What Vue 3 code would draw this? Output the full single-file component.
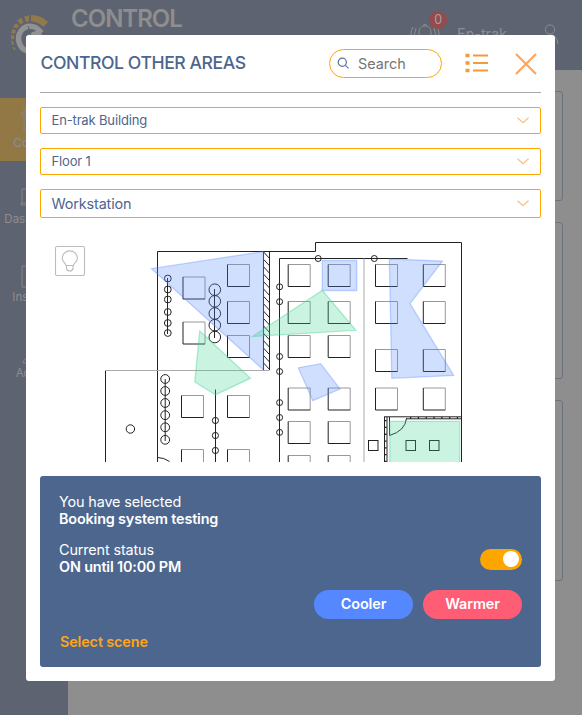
<script setup>
import { ref } from 'vue'

const enabled = ref(true)
const selects = [
  { label: 'En-trak Building', size: 'small' },
  { label: 'Floor 1', size: 'small' },
  { label: 'Workstation', size: 'large' },
]
const desks = [
  [183, 277], [183, 322], [227.5, 264.5], [227.5, 301.5], [227.5, 335.5],
  [181.5, 395.5], [227.5, 395.5], [181.5, 449.5], [227.5, 449.5],
  ...[264.5, 301.5, 335.5, 388, 421.5, 455.5].flatMap((y) => [[288.2, y], [328.2, y]]),
  ...[264.5, 301.5, 349.5, 388].flatMap((y) => [[375.5, y], [423.3, y]]),
]
const stools = [[368.5, 440.5], [406, 440.5], [429.5, 440.5]]
const column = (x, r, ys) => ys.map((y) => ({ x, y, r }))
const circles = [
  ...column(167.8, 3.4, [278.5, 289.5, 299.5, 312, 323, 333]),
  ...column(214.8, 5.8, [289.7, 301.3, 313.5, 325.2, 337]),
  ...column(165.2, 4.4, [379, 391, 403, 415.2, 427.3, 439.8]),
  ...column(130.4, 4.2, [429]),
  ...column(215.4, 3.1, [420.5, 435.5, 450.5]),
  ...column(279.6, 3, [286.8, 301.7, 356.5, 371.5, 402.6, 417.5, 432.4]),
  ...column(318.2, 3, [258.5]),
  ...column(374.3, 3, [258.5]),
]
</script>

<template>
  <div class="page">
    <header class="topbar">
      <svg class="logo" viewBox="0 0 40 42">
        <path d="M21 1Q31 1 38 8L33.500 13Q28 7.500 21 7.500Z" />
        <path d="M14 2.500L19 1.200V7.300L16 8ZM7 6.500L11.500 3.500L13.500 8.500L10.500 10.500ZM3 13L5.800 9L9 12L7 14.500ZM1 19.500L2.200 15L6 16.500L5 19.500ZM1 25V21L4 21.500V25ZM2 31L1 27H3L3.800 31ZM4 36L2.500 33H4L6 36Z" />
        <path d="M31 19C27 11 16 10 11 17C6 24 9 34 17 37M18 25L23 21L31 18" class="logo-e" />
        <path d="M18 12L21 20L15 26" class="logo-cut" />
      </svg>
      <h1>CONTROL</h1>
      <div class="account">
        <div class="bell">
          <svg viewBox="0 0 30 24"><path d="M3 4Q-1 11 3 18M6 5Q3 11 6 17M24 5Q27 11 24 17M27 4Q31 11 27 18M9 17V10C9 5 11 3 15 3S21 5 21 10V17M13 2.500Q15-.500 17 2.500" /></svg>
          <span class="count">0</span>
        </div>
        <span class="user">En-trak</span>
        <svg class="person" viewBox="0 0 18 24"><circle cx="9" cy="6.500" r="4.600" /><path d="M1 21Q2 12 9 12T17 21" /></svg>
      </div>
    </header>
    <div class="body">
      <nav class="side">
        <div class="nav-item active"><svg viewBox="0 0 24 28"><path d="M5 6H19V9H5ZM8 9V25M8 6V2H17V6" /></svg><span>Control</span></div>
        <div class="nav-item dash"><svg viewBox="0 0 24 28"><path d="M6 18V4H21V18M5 18H23V20H5Z" /></svg><span>Dashboard</span></div>
        <div class="nav-item insight"><svg viewBox="0 0 24 28"><path d="M6 3H13V24H6Z" /></svg><span>Insights</span></div>
        <div class="nav-item admin"><svg viewBox="0 0 24 28"><path d="M7 24Q8 19 14 18M7 24H18" /></svg><span>Admin</span></div>
      </nav>
      <main class="cards">
        <section class="card first"></section>
        <section class="card second"></section>
        <section class="card third"></section>
      </main>
    </div>

    <div class="modal" role="dialog">
      <div class="modal-head">
        <h2>CONTROL OTHER AREAS</h2>
        <label class="search">
          <svg viewBox="0 0 14 14"><circle cx="5.700" cy="5.700" r="4.400" /><path d="M9 9L12.500 12.300" /></svg>
          <span>Search</span>
        </label>
        <svg class="list" viewBox="0 0 24 20">
          <path d="M.5 2.500H4.500M.5 10H4.500M.5 17.500H4.500" stroke-width="3.600" />
          <path d="M8 2.500H23M8 10H23M8 17.500H23" stroke-width="1.800" />
        </svg>
        <svg class="close" viewBox="0 0 22 22"><path d="M1 1L21 21M21 1L1 21" /></svg>
      </div>

      <div class="selects">
        <div v-for="s in selects" :key="s.label" class="select" :class="s.size">
          <span>{{ s.label }}</span>
          <svg viewBox="0 0 12 7"><path d="M.5 .7L6 5.800L11.500 .7" /></svg>
        </div>
      </div>

      <svg class="plan" viewBox="40 232 501 230">
        <g class="bulb">
          <rect x="55.500" y="246.500" width="29" height="29" rx="1.500" />
          <path d="M66 265.500C66 263 62.200 262 62.200 258.500A7.600 7.600 0 0 1 77.400 258.500C77.400 262 73.500 263 73.500 265.500ZM66.500 266V268.500Q67.200 271 69.800 271T73 268.500V266" />
        </g>
        <g class="walls">
          <path d="M157.500 462V251.500H315.500V242.500H461.500V462" />
          <path d="M105.500 462V370.500" />
          <path d="M105.500 370.500H269.500" class="faint" />
          <path d="M263.500 251.500V370M269.500 251.500V370" />
          <path v-for="n in 16" :key="n" :d="`M263.500 ${244.500 + n * 7.400}l6 6.500`" />
          <path d="M279.500 462V258.500H407.500" class="dark" />
          <path d="M364 258.500V462" class="faint" />
          <path d="M167.500 278V334M214.500 289V338M165.200 379V441M215.500 389.500V462" />
          <path d="M157.500 457.500Q164 457.500 169.500 461.500" />
        </g>
        <g class="desks">
          <template v-for="([x, y], i) in desks" :key="i">
            <path class="desk-light" :d="`M${x} ${y}h22v22`" />
            <path :d="`M${x} ${y}v22h22`" />
          </template>
          <rect v-for="([x, y], i) in stools" :key="i" :x="x" :y="y" width="9.500" height="10" />
          <circle v-for="(c, i) in circles" :key="i" :cx="c.x" :cy="c.y" :r="c.r" />
        </g>
        <g class="room">
          <path d="M384.500 462V417M387 462V417M389.500 435.500V417M384 416.800H462M406 418.800H462" />
          <path d="M385.700 420V462" stroke-width="1.800" stroke-dasharray="1.300 5.500" />
          <path d="M410 417.800H462" stroke-width="1.800" stroke-dasharray="1.300 6.500" />
          <path d="M406.500 418.500Q405 431 389.500 435.500" />
        </g>
        <g class="zone-blue">
          <path d="M151.500 268.700L263.500 251.500V370Z" />
          <path d="M322.300 260.500H356.700V290.500H322.300Z" />
          <path d="M389.300 259L442.500 261L410 303.700L453.700 375.500L391.800 378.300Z" />
          <path d="M298.300 367.800L320.700 363.700L340 389L312.800 400.700Z" />
        </g>
        <g class="zone-green">
          <path d="M199.700 331L250.500 378.200L215.500 394.700L194.800 382Z" />
          <path d="M252.500 336.500L322.300 290.300L355.800 330.300Z" />
          <path d="M389.800 421.300H459.700V465H389.800Z" />
        </g>
      </svg>

      <div class="panel">
        <div class="text"><div>You have selected</div><strong>Booking system testing</strong></div>
        <div class="status">
          <div class="text"><div>Current status</div><strong>ON until 10:00 PM</strong></div>
          <button class="toggle" :class="{ on: enabled }" aria-label="Power" @click="enabled = !enabled"><i></i></button>
        </div>
        <div class="actions"><button class="cool">Cooler</button><button class="warm">Warmer</button></div>
        <a class="scene">Select scene</a>
      </div>
    </div>
  </div>
</template>

<style>
body { margin: 0; overflow: hidden; }
</style>

<style scoped>
* { box-sizing: border-box; }
.page { position: relative; width: 582px; height: 715px; overflow: hidden; display: flex; flex-direction: column; background: #8e8e8e; font-family: Inter, sans-serif; }
svg { fill: none; display: block; flex: none; }
h1, h2 { margin: 0; }
.topbar { height: 70px; flex: none; background: #5d6370; color: #8e8e8e; display: flex; align-items: flex-start; }
.logo { width: 40px; height: 42px; margin: 14px 0 0 10px; fill: #92794a; }
.logo-e { fill: none; stroke: #929292; stroke-width: 5.500; }
.logo-cut { fill: none; stroke: #5d6370; stroke-width: 1; }
h1 { margin: 5px 0 0 21px; font-size: 24px; line-height: 28px; font-weight: 600; letter-spacing: -1px; }
.account { display: flex; margin-left: auto; padding: 23px 23px 0 0; }
.account svg { stroke: #8e8e8e; stroke-width: 1; }
.bell { position: relative; width: 30px; left: -1px; }
.bell svg { width: 30px; height: 24px; }
.count { position: absolute; left: 19px; top: -12px; width: 18px; height: 18px; border-radius: 50%; background: #944b4d; color: #a2a2a2; font-size: 12.500px; line-height: 18px; text-align: center; }
.user { font-size: 14.400px; line-height: 22px; margin: 0 34px 0 16px; }
.person { width: 18px; height: 24px; }
.body { flex: 1; display: flex; }
.side { width: 68px; background: #5d6370; color: #8e8e8e; padding-top: 28px; font-size: 11.500px; }
.nav-item { display: flex; flex-direction: column; align-items: center; width: 68px; }
.nav-item svg { width: 24px; height: 28px; stroke: #858585; margin-right: 12px; }
.nav-item span { line-height: 14px; }
.active { height: 63px; background: #927844; padding-top: 9px; font-size: 12px; }
.active span { margin-top: 1px; }
.dash { margin-top: 24px; }
.dash span { margin-top: -1px; }
.insight { margin-top: 37px; }
.insight span { margin-top: -1px; margin-right: 1px; }
.admin { margin-top: 35px; }
.admin span { margin-top: -1px; margin-right: 2px; }
.cards { flex: 1; padding: 21px 19px 0 16px; }
.card { border: 1px solid #6d737d; border-radius: 3px; }
.first { height: 110px; }
.second { height: 157px; margin-top: 21px; }
.third { height: 181px; margin-top: 21px; }
.modal { position: absolute; left: 26px; top: 35px; width: 529px; height: 646px; background: #fff; border-radius: 3px; padding: 0 14px; }
.modal-head { height: 58px; border-bottom: 1px solid #a9a9a9; display: flex; align-items: center; color: #4d668e; }
h2 { font-size: 17.600px; font-weight: 550; line-height: 22px; width: 289px; white-space: nowrap; padding-left: .5px; letter-spacing: -.42px; margin-top: -2px; }
.search { width: 113px; height: 29px; border: 1px solid orange; border-radius: 15px; display: flex; align-items: center; padding-left: 7px; gap: 8px; color: #757575; font-size: 14.400px; }
.search svg { width: 13px; height: 13px; stroke: #5f7196; stroke-width: 1.300; margin-top: -1px; }
.list { width: 24px; height: 20px; stroke: #f39b37; margin: -2px 0 0 23px; }
.close { width: 22px; height: 22px; stroke: #ffa45a; stroke-width: 2.200; margin: 1px 0 0 26px; }
.selects { display: grid; gap: 14px; padding-top: 14px; }
.select { height: 27px; border: 1px solid orange; border-radius: 2px; display: flex; align-items: center; justify-content: space-between; padding: 0 11px 1px 10.500px; color: #4d668e; font-size: 13px; letter-spacing: -.15px; }
.select.large { height: 29px; font-size: 14.400px; letter-spacing: -.14px; padding-bottom: 0; }
.select svg { width: 12px; height: 7px; stroke: #fabd82; stroke-width: 1.200; margin-top: 1px; }
.select.large svg { margin-top: -1px; }
.plan { width: 501px; height: 230px; margin-top: 14px; }
.bulb { stroke: #bcbcbc; stroke-width: 1.100; }
.walls, .desks, .room { stroke: #222; stroke-width: 1; }
.walls .faint { stroke: #aaa; }
.desk-light { stroke: #999; }
.zone-blue { fill: rgba(85, 135, 255, .27); stroke: rgba(85, 135, 255, .35); stroke-width: 1.300; }
.zone-green { fill: rgba(60, 210, 145, .27); stroke: rgba(60, 210, 145, .4); stroke-width: 1.300; }
.panel { height: 191px; margin-top: 14px; background: #4d668e; border-radius: 3px; padding: 17px 19px; color: #fff; font-size: 14.400px; line-height: 17px; display: flex; flex-direction: column; letter-spacing: -.13px; }
strong { font-weight: 600; display: block; letter-spacing: -.16px; }
.status { display: flex; justify-content: space-between; align-items: center; margin-top: 14px; }
.toggle { width: 42px; height: 21px; border: 0; border-radius: 11px; background: #aaa; padding: 2px 3px; display: flex; margin-top: 2px; }
.toggle.on { background: orange; justify-content: flex-end; }
.toggle i { width: 16px; height: 16px; border-radius: 50%; background: #fff; }
.actions { display: flex; justify-content: flex-end; gap: 10px; margin-top: 15px; }
.actions button { width: 99px; height: 29px; border: 0; border-radius: 15px; padding: 0 0 2px; color: #fff; font: 600 14.400px Inter, sans-serif; letter-spacing: -.1px; }
.cool { background: #5588ff; }
.warm { background: #ff5c75; }
.scene { color: #ffa516; font-weight: 600; margin: 14px 0 0 1px; letter-spacing: -.13px; }
</style>
